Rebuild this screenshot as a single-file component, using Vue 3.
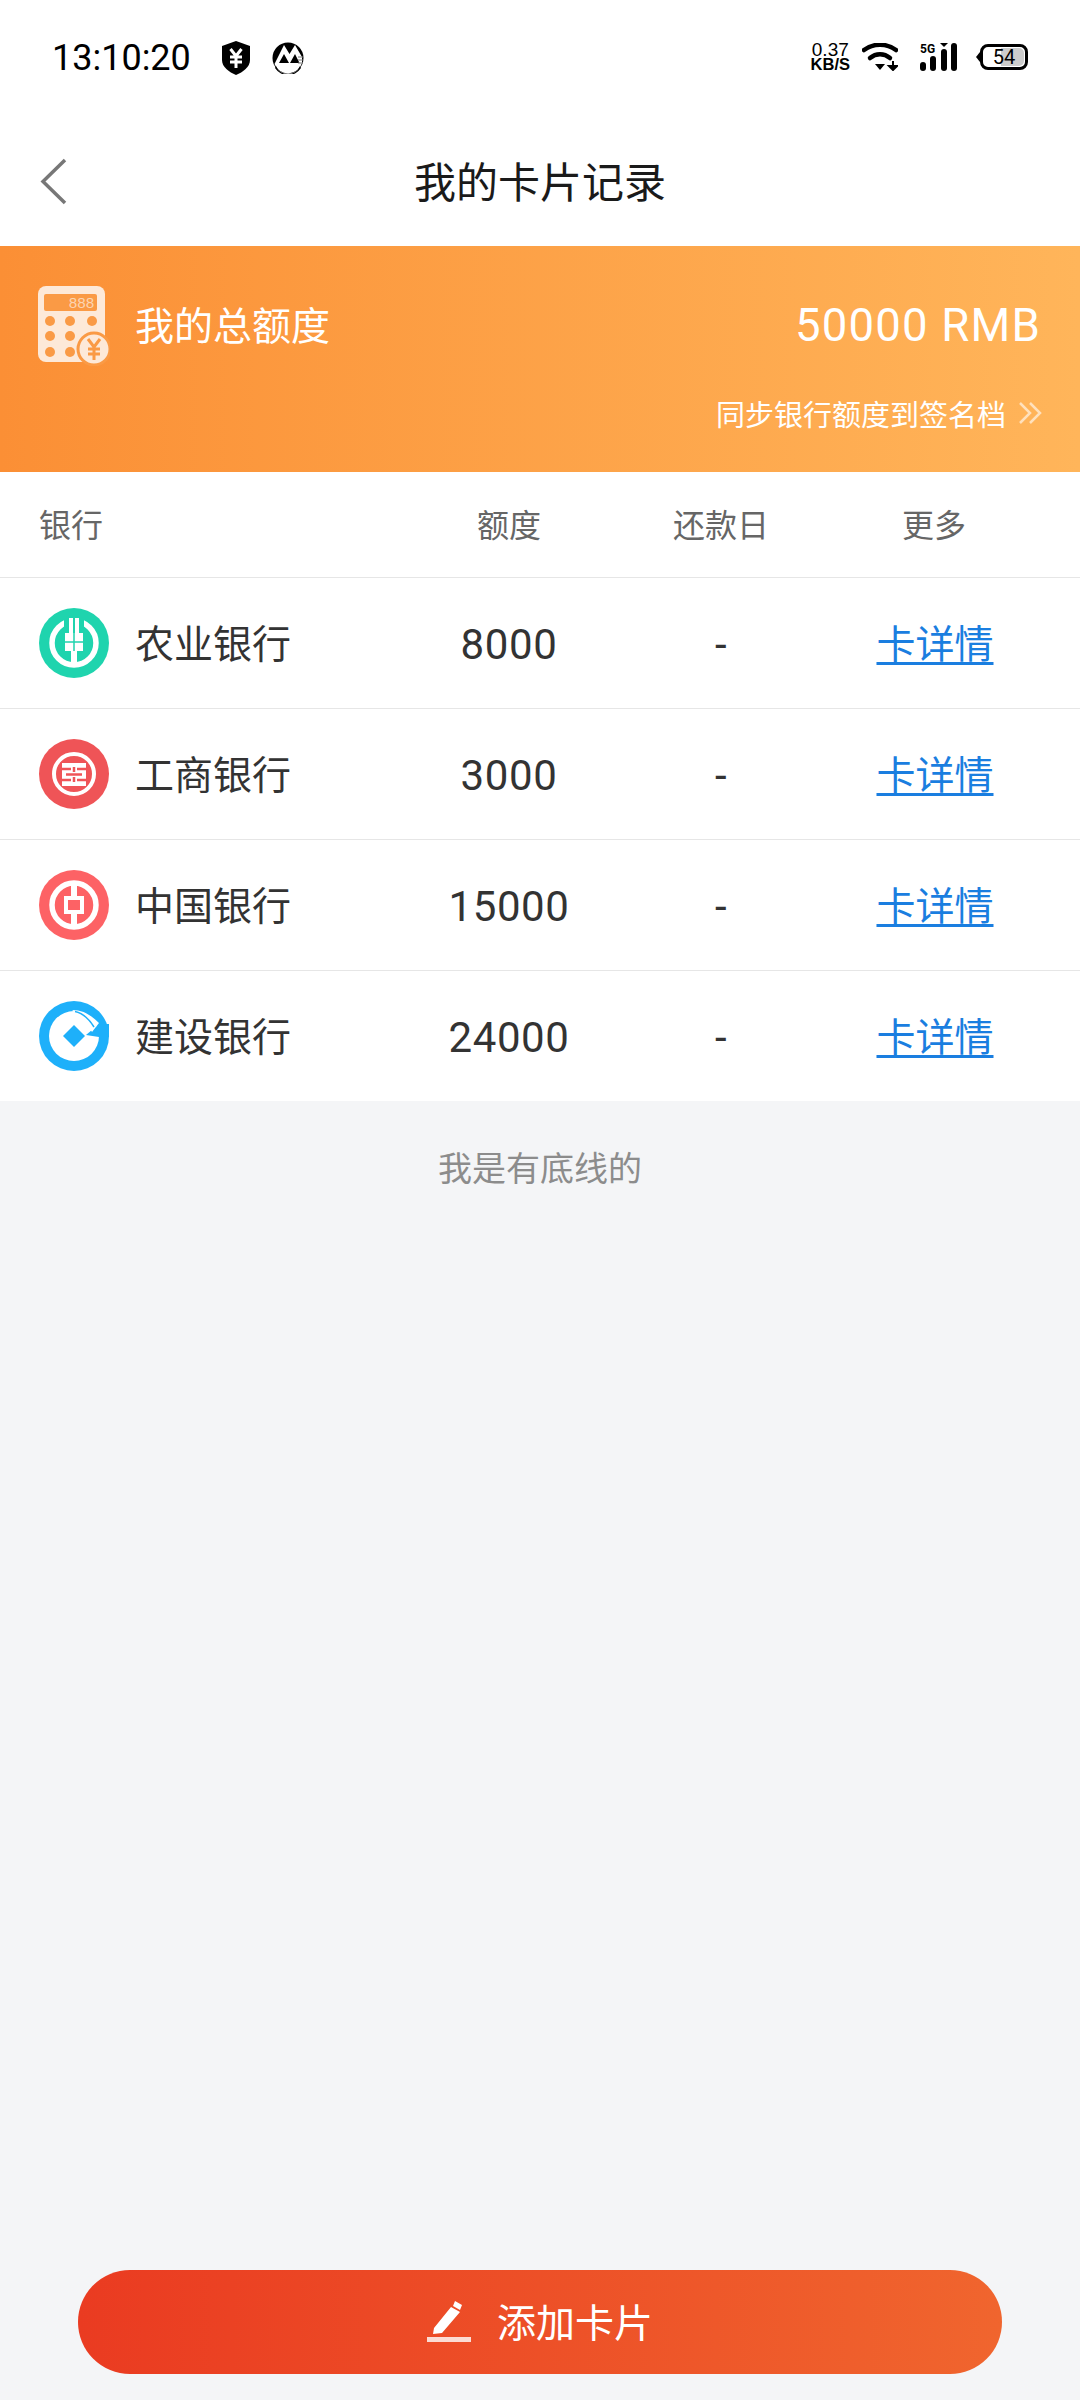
<template>
  <div class="page">
    <div class="status">
      <div class="status-left">
        <span class="clock">13:10:20</span>
        <svg class="st-shield" viewBox="0 0 30 34" width="30" height="34">
          <path d="M15 0 L29 5 V19 C29 26 22 31 15 34 C8 31 1 26 1 19 V5 Z" fill="#000" />
          <path d="M9.500 8 L15 15 L20.500 8 M15 15 V27 M9 16 H21 M9 21 H21" fill="none" stroke="#fff" stroke-width="3" />
        </svg>
        <svg class="st-cmb" viewBox="0 0 32 32" width="32" height="32">
          <circle cx="16" cy="16" r="15.500" fill="#000" />
          <path d="M2.500 22 L12 3 L17.500 12 L23 3 L30 15 V21 A14.500 14.500 0 0 1 2.500 22 Z" fill="#fff" />
          <path d="M12 12 L17 21 H7 Z M23 12 L27.500 21 H18 Z" fill="#000" />
          <path d="M3 26 A15.500 15.500 0 0 0 29 26 L28 24 A13 13 0 0 1 4 24 Z" fill="#000" />
          <path d="M26 15 H31 M26 18 H31 M26 21 H31" stroke="#777" stroke-width="1" />
        </svg>
      </div>
      <div class="status-right">
        <div class="speed"><span>0.37</span><b>KB/S</b></div>
        <svg class="st-wifi" viewBox="0 0 36 28" width="36" height="28">
          <path d="M2 7 C11 0 25 0 34 7" fill="none" stroke="#000" stroke-width="4.500" stroke-linecap="round" />
          <path d="M8 15 C14 10 22 10 28 15" fill="none" stroke="#000" stroke-width="4.500" stroke-linecap="round" />
          <path d="M13 21 H23 L18 27 Z" fill="#000" />
          <path d="M31 18 V23 M27 23 H35 L31 27 Z" fill="#000" stroke="#000" stroke-width="2" />
        </svg>
        <div class="signal">
          <span class="five-g">5G</span>
          <svg viewBox="0 0 38 28" width="38" height="28">
            <rect x="0" y="19" width="6" height="9" rx="3" fill="#000" />
            <rect x="10" y="13" width="6" height="15" rx="3" fill="#000" />
            <rect x="21" y="6" width="6" height="22" rx="3" fill="#000" />
            <path d="M20 0 H28 L24 4 Z" fill="#000" />
            <rect x="31" y="0" width="6" height="28" rx="3" fill="#000" />
          </svg>
        </div>
        <div class="battery">
          <span class="batt-fill"></span>
          <span class="batt-num">54</span>
        </div>
      </div>
    </div>

    <header class="nav">
      <svg class="nav-back" viewBox="0 0 28 48" width="28" height="48">
        <path d="M25 3 L3 24.500 L25 46" fill="none" stroke="#777" stroke-width="3.500" />
      </svg>
      <h1 class="nav-title">我的卡片记录</h1>
    </header>

    <section class="banner">
      <div class="banner-top">
        <div class="banner-label">
          <svg class="calc" viewBox="0 0 72 80" width="72" height="80">
            <rect x="0" y="0" width="67" height="76" rx="8" fill="#fde9d8" />
            <rect x="6" y="8" width="53" height="17" rx="2" fill="#fa9a45" />
            <text x="56" y="22" text-anchor="end" class="calc-num">888</text>
            <g fill="#fa9a45">
              <circle cx="12" cy="35" r="5" /><circle cx="32" cy="35" r="5" /><circle cx="54" cy="35" r="5" />
              <circle cx="12" cy="50" r="5" /><circle cx="32" cy="50" r="5" />
              <circle cx="12" cy="66" r="5" /><circle cx="32" cy="66" r="5" />
            </g>
            <circle cx="56" cy="63" r="16" fill="#fde9d8" stroke="#fa9a45" stroke-width="3" />
            <path d="M50 53 L56 61 L62 53 M56 61 V74 M50 63 H62 M50 68 H62" fill="none" stroke="#fa9a45" stroke-width="3" />
          </svg>
          <span>我的总额度</span>
        </div>
        <span class="banner-amount">50000 RMB</span>
      </div>
      <div class="banner-sync">
        <span>同步银行额度到签名档</span>
        <svg viewBox="0 0 24 24" width="24" height="24">
          <path d="M2 2 L12 12 L2 22 M12 2 L22 12 L12 22" fill="none" stroke="#fff" stroke-opacity=".6" stroke-width="2.500" />
        </svg>
      </div>
    </section>

    <div class="table">
      <div class="row head">
        <span class="col-bank head-bank">银行</span>
        <span>额度</span>
        <span>还款日</span>
        <span class="head-more">更多</span>
      </div>
      <div v-for="b in banks" :key="b.name" class="row body">
        <div class="col-bank bank">
          <svg viewBox="0 0 70 70" width="70" height="70">
            <circle cx="35" cy="35" r="35" :fill="b.color" />
            <g v-if="b.id === 'abc'">
              <circle cx="35" cy="35" r="22" fill="none" stroke="#fff" stroke-width="5.500" />
              <rect x="25" y="6" width="20" height="20" :fill="b.color" />
              <path d="M30 10 H34 V25 H36 V10 H40 V25 H44 V43 H38 V56 H32 V43 H26 V25 H30 Z" fill="#fff" />
              <path d="M26 34 H44 M35 25 V43" :stroke="b.color" stroke-width="1.500" />
            </g>
            <g v-else-if="b.id === 'icbc'">
              <circle cx="35" cy="35" r="20" fill="none" stroke="#fff" stroke-width="4" />
              <rect x="23" y="24" width="24" height="23" fill="#fff" />
              <path d="M23 30 H32 M38 30 H47 M23 41 H32 M38 41 H47 M27 35.500 H43 M35 28 V33 M35 38 V43" fill="none" :stroke="b.color" stroke-width="2.500" />
            </g>
            <g v-else-if="b.id === 'boc'">
              <circle cx="35" cy="35" r="22" fill="none" stroke="#fff" stroke-width="5.500" />
              <rect x="32" y="12" width="6" height="46" fill="#fff" />
              <rect x="25" y="26" width="20" height="18" fill="#fff" />
              <rect x="29" y="30" width="12" height="10" :fill="b.color" />
            </g>
            <g v-else>
              <circle cx="35" cy="35" r="25" fill="#fff" />
              <path d="M47 34 L60 23 L70 23 V36 H60 Z" :fill="b.color" />
              <path d="M33 9 C44 9 52 14 60 22 L53 31 C48 22 42 15 33 9 Z" fill="#fff" />
              <path d="M36 10.500 C44 12 50 18 55 26" fill="none" :stroke="b.color" stroke-width="1.500" />
              <path d="M35 24 L46 35 L35 46 L24 35 Z" :fill="b.color" />
            </g>
          </svg>
          <span class="bank-name">{{ b.name }}</span>
        </div>
        <span class="num">{{ b.limit }}</span>
        <span class="num">-</span>
        <a class="link">卡详情</a>
      </div>
    </div>

    <p class="bottom-line">我是有底线的</p>

    <div class="spacer"></div>

    <button class="add-btn">
      <svg viewBox="0 0 44 42" width="44" height="42">
        <path d="M28 0 L35 4 L33 9 L26 5 Z M24 6 L33 11 L15 32 L6 33 L7 27 Z" fill="#fff" />
        <rect x="0" y="36" width="44" height="5" fill="#fff" fill-opacity=".8" />
      </svg>
      <span class="add-text">添加卡片</span>
    </button>
  </div>
</template>

<script setup>
const banks = [
  { id: 'abc', name: '农业银行', limit: 8000, color: '#1fd4ae' },
  { id: 'icbc', name: '工商银行', limit: 3000, color: '#ef5457' },
  { id: 'boc', name: '中国银行', limit: 15000, color: '#fd6265' },
  { id: 'ccb', name: '建设银行', limit: 24000, color: '#1eb0fa' }
]
</script>

<style>
html, body { margin: 0; background: #f4f5f7; }
</style>

<style scoped>
.page {
  width: 1080px; height: 2400px;
  display: flex; flex-direction: column;
  background: #f4f5f7; color: #333;
  font-family: Roboto, "Noto Sans CJK SC", sans-serif;
  overflow: hidden;
}

.status {
  height: 112px; flex: none;
  padding: 2px 52px 0; box-sizing: border-box;
  display: flex; align-items: center; justify-content: space-between;
  background: #fff;
}
.status-left { display: flex; align-items: center; padding-top: 2px; }
.clock { font-size: 36px; color: #000; width: 168px; }
.st-shield { margin-left: 1px; }
.st-cmb { margin-left: 21px; }
.status-right { display: flex; align-items: center; }
.speed {
  display: flex; flex-direction: column; align-items: center;
  font-size: 19px; line-height: 15px; color: #000;
  font-family: "Liberation Sans", sans-serif;
}
.speed b { font-size: 16.500px; }
.st-wifi { margin-left: 12px; }
.signal { position: relative; display: flex; margin-left: 22px; }
.five-g {
  position: absolute; left: 0; top: 0;
  font-size: 12px; font-weight: 700; color: #000; line-height: 12px;
}
.battery {
  width: 42px; height: 20px; margin-left: 22px;
  border: 3px solid #000; border-radius: 8px;
  position: relative; display: flex; align-items: center; justify-content: center;
}
.battery::before {
  content: ""; position: absolute; left: -7px; top: 5px;
  border: 5px solid transparent; border-left: 0; border-right: 4px solid #000;
}
.batt-fill { position: absolute; right: 1px; top: 1px; bottom: 1px; width: 23px; background: #ccc; border-radius: 0 5px 5px 0; }
.batt-num { position: relative; font-size: 20px; color: #000; }

.nav {
  height: 134px; flex: none; background: #fff; position: relative;
  display: flex; align-items: center; justify-content: center;
}
.nav-back { position: absolute; left: 40px; top: 45px; }
.nav-title { margin: 0; font-size: 42px; font-weight: 400; color: #1a1a1a; }

.banner {
  height: 226px; flex: none; box-sizing: border-box;
  padding: 40px 38px 0 38px;
  background: linear-gradient(90deg, #fb8f35, #ffb55a);
  color: #fff;
}
.banner-top { display: flex; justify-content: space-between; align-items: flex-start; }
.banner-label { display: flex; align-items: flex-start; gap: 25px; font-size: 39px; line-height: 1; }
.banner-label span { margin-top: 22px; }
.calc-num { font-size: 15px; fill: #fde9d8; fill-opacity: .75; font-family: "Liberation Mono", monospace; letter-spacing: -.5px; }
.banner-amount { font-size: 45.500px; letter-spacing: 1.200px; margin-top: 13px; line-height: 54px; margin-right: 1px; }
.banner-sync {
  display: flex; justify-content: flex-end; align-items: center; gap: 12px;
  font-size: 29px; margin-top: 26px;
}

.table { background: #fff; flex: none; }
.row {
  display: grid; grid-template-columns: 364px 210px 214px 214px;
  padding: 0 38px 0 40px; align-items: center; text-align: center;
}
.head { height: 105px; padding-bottom: 3px; box-sizing: border-box; color: #666; font-size: 32px; }
.head-bank { margin-left: -1px; }
.head-more { margin-left: -2px; }
.body {
  height: 131px; box-sizing: border-box;
  border-top: 1px solid #e6e6e6; font-size: 39px; color: #333;
}
.col-bank { text-align: left; }
.bank { display: flex; align-items: center; gap: 26px; margin-left: -1px; }
.bank-name { padding-bottom: 4px; }
.num { font-size: 42px; letter-spacing: .600px; padding-top: 2px; }
.link { color: #1a7ee0; text-decoration: underline; text-underline-offset: 4px; padding-bottom: 4px; }

.bottom-line { margin: 44px 0 0; text-align: center; font-size: 34px; line-height: 48px; color: #8c8c8c; }
.spacer { flex: 1; }

.add-btn {
  align-self: center; flex: none;
  width: 924px; height: 104px; margin-bottom: 26px;
  border: 0; border-radius: 52px; padding: 0;
  background: linear-gradient(90deg, #ea3b21, #f0652e);
  color: #fff; font: inherit; font-size: 39px;
  display: flex; align-items: center; justify-content: center; gap: 26px;
}
.add-text { padding-bottom: 5px; }
</style>
